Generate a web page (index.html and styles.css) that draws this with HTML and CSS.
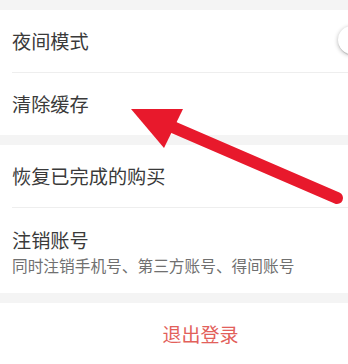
FILE: index.html
```html
<!DOCTYPE html>
<html lang="zh">
<head>
<meta charset="utf-8">
<link rel="stylesheet" href="styles.css">
</head>
<body>
<div class="viewport">
<div class="screen">
  <div class="group">
    <div class="row">
      <span class="label">夜间模式</span>
      <span class="switch"><span class="knob"></span></span>
    </div>
    <div class="divider"></div>
    <div class="row"><span class="label">清除缓存</span></div>
  </div>
  <div class="group">
    <div class="row"><span class="label">恢复已完成的购买</span></div>
    <div class="divider"></div>
    <div class="row tall">
      <span class="label">注销账号</span>
      <span class="sub">同时注销手机号、第三方账号、得间账号</span>
    </div>
  </div>
  <div class="group">
    <div class="row center"><span class="logout">退出登录</span></div>
  </div>
  <svg class="arrow" width="348" height="364" viewBox="0 0 348 364">
    <line x1="337" y1="198" x2="168" y2="125" stroke="#e8192c" stroke-width="12" stroke-linecap="round"/>
    <polygon points="131,109 183,109 164,148" fill="#e8192c"/>
  </svg>
</div>
</div>
</body>
</html>
```
FILE: styles.css
```css
html, body {
  margin: 0;
  padding: 0;
  background: #f4f4f4;
  overflow: hidden;
}
.viewport {
  width: 348px;
  height: 364px;
  overflow: hidden;
}
.screen {
  position: relative;
  width: 401px;
  height: 364px;
  padding-top: 10px;
  box-sizing: border-box;
  font-family: "Noto Sans CJK SC", "Noto Sans", sans-serif;
}
.group {
  background: #ffffff;
  margin-bottom: 10px;
}
.row {
  height: 62px;
  display: flex;
  align-items: center;
  padding-left: 12px;
  box-sizing: border-box;
}
.row.tall {
  height: 85px;
  flex-direction: column;
  align-items: flex-start;
  justify-content: flex-start;
  padding-top: 20px;
}
.row.center {
  justify-content: center;
  padding-left: 0;
}
.label {
  font-size: 19.2px;
  line-height: 24px;
  color: #3a3a3a;
}
.sub {
  margin-top: 4px;
  font-size: 15.7px;
  line-height: 20px;
  color: #707070;
}
.logout {
  font-size: 19px;
  line-height: 24px;
  color: #e2605a;
}
.divider {
  height: 1px;
  margin-left: 12px;
  background: #eeeeee;
}
.switch {
  margin-left: auto;
  margin-right: 12px;
  width: 51px;
  height: 30px;
  border-radius: 15px;
  background: #ffffff;
  border: 1px solid #e4e4e4;
  box-sizing: border-box;
  position: relative;
}
.knob {
  position: absolute;
  left: -1px;
  top: -1px;
  width: 28px;
  height: 28px;
  border-radius: 50%;
  background: #ffffff;
  box-shadow: 0 1px 4px rgba(0,0,0,0.3);
}
.arrow {
  position: absolute;
  left: 0;
  top: 0;
}
```
